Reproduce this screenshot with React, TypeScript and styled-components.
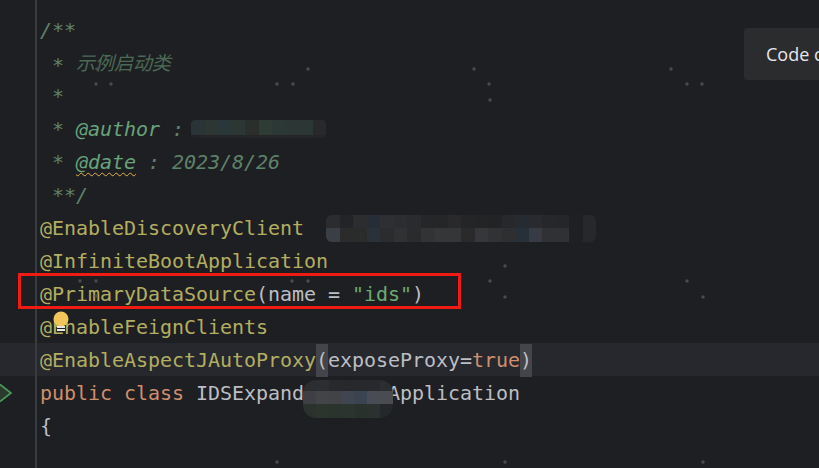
import styled, { createGlobalStyle } from 'styled-components';

const GlobalStyle = createGlobalStyle`
	html, body {
		margin: 0;
		background: #1e1f22;
	}
`;

const Page = styled.div`
	position: relative;
	width: 819px;
	height: 468px;
	overflow: hidden;
	background: #1e1f22;
`;

const Editor = styled.div`
	display: flex;
	flex-direction: column;
	height: 100%;
	font-family: 'DejaVu Sans Mono', 'Noto Sans CJK SC', monospace;
	font-size: 20px;
	letter-spacing: -0.04px;
	color: #bcbec4;
`;

const Row = styled.div<{ $active?: boolean; $fill?: boolean; $height?: number }>`
	display: flex;
	flex: ${({ $fill }) => ($fill ? 1 : 'none')};
	height: ${({ $fill, $height }) => ($fill ? 'auto' : `${$height ?? 33}px`)};
	background: ${({ $active }) => ($active ? '#26282e' : 'transparent')};
`;

const Gutter = styled.div`
	display: flex;
	align-items: center;
	flex: none;
	width: 35px;
	border-right: 2px solid #393b40;
`;

const Code = styled.div`
	padding-left: 3px;
	white-space: pre;
	line-height: 33px;
`;

const Line = styled.span`
	position: relative;
	top: 1px;
`;

const Doc = styled.span`
	color: #5f826b;
	font-style: italic;
`;

const DocCjk = styled.span`
	position: relative;
	top: -2px;
	color: #4b6a56;
	font-style: italic;
	font-size: 19px;
	font-family: 'Noto Sans CJK SC', sans-serif;
`;

const DocTag = styled.span<{ $warn?: boolean }>`
	color: #67a37c;
	font-style: italic;
	text-decoration: ${({ $warn }) => ($warn ? 'underline wavy #e0b04a 1px' : 'none')};
	text-underline-offset: 3px;
`;

const Annotation = styled.span`
	color: #b3ae60;
`;

const Keyword = styled.span`
	color: #cf8e6d;
`;

const Str = styled.span`
	color: #6aab73;
`;

const Brace = styled.span`
	background: linear-gradient(#43454a, #43454a) center / 100% 33px no-repeat;
	padding: 8px 0;
`;

const Marker = styled.div`
	position: absolute;
	left: 18px;
	top: 273px;
	width: 443px;
	height: 36px;
	box-sizing: border-box;
	border: 3px solid #f01c14;
`;

const Toast = styled.div`
	position: absolute;
	left: 744px;
	top: 28px;
	width: 140px;
	height: 52px;
	padding-left: 22px;
	box-sizing: border-box;
	border-radius: 4px;
	background: #2b2c2e;
	color: #e6e7ea;
	font-family: 'Open Sans', sans-serif;
	font-size: 18px;
	line-height: 52px;
	white-space: nowrap;
`;

const Mosaic = styled.div<{ $x: number; $y: number; $radius: number }>`
	position: absolute;
	left: ${({ $x }) => $x}px;
	top: ${({ $y }) => $y}px;
	display: flex;
	flex-direction: column;
	border-radius: ${({ $radius }) => $radius}px;
	overflow: hidden;
`;

const MosaicRow = styled.div<{ $height: number }>`
	display: flex;
	height: ${({ $height }) => $height}px;
`;

const MosaicCell = styled.div<{ $color: string; $width: number }>`
	flex: none;
	width: ${({ $width }) => $width}px;
	background: ${({ $color }) => $color};
`;

const Overlay = styled.svg`
	position: absolute;
	left: 0;
	top: 0;
	pointer-events: none;
`;

const speckles = [
	[97, 69], [96, 84], [111, 84], [277, 84], [293, 84], [308, 69], [474, 69], [489, 84], [490, 100],
	[671, 69], [687, 84], [702, 84], [505, 266], [490, 281], [505, 297], [687, 281], [703, 297],
	[80, 281], [96, 281], [96, 296], [292, 281], [308, 281], [277, 462], [505, 462], [703, 462],
];

const patches = [
	{
		x: 326,
		y: 215,
		cell: 13.5,
		radius: 6,
		rows: [
			{
				height: 13,
				colors: ['#2a2c2f', '#222427', '#2c2d2f', '#262d36', '#2e2f32', '#2b2d31', '#292b2e', '#252628', '#252628', '#29292b', '#242527', '#232426', '#222325', '#27282b', '#252b31', '#292a2d', '#26272a', '#25262a', '#1f2023', '#272829'],
			},
			{
				height: 14,
				colors: ['#3a3f45', '#2b2b2c', '#2a2b2b', '#2a3139', '#2b2c2d', '#303133', '#2a2b2d', '#323335', '#353638', '#353638', '#2a2a2b', '#36373b', '#313234', '#2e2f30', '#263039', '#383b45', '#303134', '#303134', '#1f2023', '#272829'],
			},
		],
	},
	{
		x: 303,
		y: 380,
		cell: 12.9,
		radius: 13,
		rows: [
			{ height: 11, colors: ['#2b2d31', '#2c2e32', '#27292c', '#26282b', '#27292c', '#27292c', '#2b2d31'] },
			{ height: 13, colors: ['#3d3f45', '#434448', '#424347', '#3f4651', '#3a4352', '#494c55', '#4a4c52'] },
			{ height: 14, colors: ['#2a322e', '#2b352e', '#2a332d', '#2b342e', '#29312d', '#2a312f', '#25282a'] },
		],
	},
	{
		x: 191,
		y: 120,
		cell: 13.5,
		radius: 4,
		rows: [
			{ height: 15, colors: ['#2a3335', '#2e3631', '#2a3738', '#2c3735', '#2a2f2c', '#2f3b35', '#2c3835', '#2c3735', '#2a3735', '#28292a'] },
			{ height: 3, colors: ['#222426', '#222426', '#222426', '#222426', '#242627', '#242627', '#242627', '#242627', '#242627', '#242526'] },
		],
	},
];

const RunArrow = () => (
	<svg width="13" height="20" viewBox="0 0 13 20">
		<path d="M0 1.5 L11 10 L0 18.5" fill="#2a3a2d" stroke="#4f9a5a" strokeWidth="1.6" />
	</svg>
);

const lines = [
	<Doc>/**</Doc>,
	<><Doc> * </Doc><DocCjk>示例启动类</DocCjk></>,
	<Doc> *</Doc>,
	<><Doc> * </Doc><DocTag>@author</DocTag><Doc> :</Doc></>,
	<><Doc> * </Doc><DocTag $warn>@date</DocTag><Doc> : 2023/8/26</Doc></>,
	<Doc> **/</Doc>,
	<Annotation>@EnableDiscoveryClient</Annotation>,
	<Annotation>@InfiniteBootApplication</Annotation>,
	<><Annotation>@PrimaryDataSource</Annotation>(name = <Str>"ids"</Str>)</>,
	<Annotation>@EnableFeignClients</Annotation>,
	<><Annotation>@EnableAspectJAutoProxy</Annotation><Brace>(</Brace>exposeProxy=<Keyword>true</Keyword><Brace>)</Brace></>,
	<><Keyword>public class</Keyword> IDSExpand       Application</>,
	<>{'{'}</>,
];

export default function App() {
	return (
		<Page>
			<GlobalStyle />
			<Editor>
				<Row $height={13}>
					<Gutter />
				</Row>
				{lines.map((line, i) => (
					<Row key={i} $active={i === 10}>
						<Gutter>{i === 11 && <RunArrow />}</Gutter>
						<Code>
							<Line>{line}</Line>
						</Code>
					</Row>
				))}
				<Row $fill>
					<Gutter />
				</Row>
			</Editor>
			{patches.map((patch) => (
				<Mosaic key={patch.x} $x={patch.x} $y={patch.y} $radius={patch.radius}>
					{patch.rows.map((row, r) => (
						<MosaicRow key={r} $height={row.height}>
							{row.colors.map((color, c) => (
								<MosaicCell key={c} $color={color} $width={patch.cell} />
							))}
						</MosaicRow>
					))}
				</Mosaic>
			))}
			<Overlay width="819" height="468" viewBox="0 0 819 468">
				{speckles.map(([x, y]) => (
					<circle key={`${x}-${y}`} cx={x} cy={y} r="1.7" fill="#4a4b4f" />
				))}
				<circle cx="61" cy="319" r="7.5" fill="#f2c55c" />
				<rect x="57" y="326" width="8" height="2" fill="#e6e6e6" />
				<rect x="57" y="329" width="8" height="2" fill="#e6e6e6" />
			</Overlay>
			<Marker />
			<Toast>Code copied</Toast>
		</Page>
	);
}
